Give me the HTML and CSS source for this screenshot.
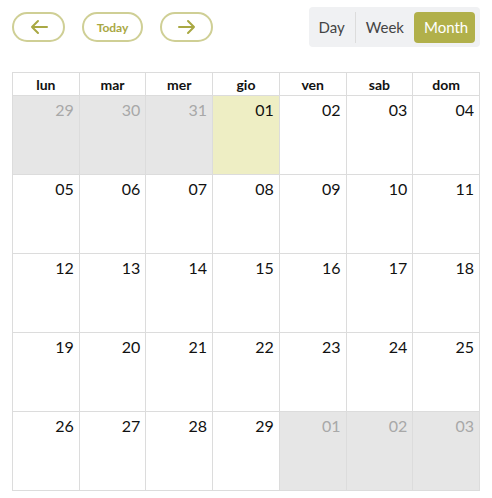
FILE: index.html
```html
<!DOCTYPE html>
<html lang="it">
<head>
    <meta charset="UTF-8">
    <title>Calendario</title>
    <link rel="stylesheet" href="styles.css">
</head>
<body>

<div class="toolbar">
    <div class="nav">
        <button class="navbtn arrow" title="prev">
            <svg width="20" height="16" viewBox="0 0 20 16"><path d="M18 8H3M9 2L3 8l6 6" fill="none" stroke="#a9a843" stroke-width="2" stroke-linecap="round" stroke-linejoin="round"/></svg>
        </button>
        <button class="navbtn todaybtn">Today</button>
        <button class="navbtn arrow" title="next">
            <svg width="20" height="16" viewBox="0 0 20 16"><path d="M2 8h15M11 2l6 6-6 6" fill="none" stroke="#a9a843" stroke-width="2" stroke-linecap="round" stroke-linejoin="round"/></svg>
        </button>
    </div>
    <div class="views">
        <span class="view">Day</span>
        <span class="sep"></span>
        <span class="view">Week</span>
        <span class="view active">Month</span>
    </div>
</div>

<table class="month">
    <thead>
        <tr>
            <th>lun</th><th>mar</th><th>mer</th><th>gio</th><th>ven</th><th>sab</th><th>dom</th>
        </tr>
    </thead>
    <tbody>
        <tr>
            <td class="other">29</td><td class="other">30</td><td class="other">31</td><td class="current">01</td><td>02</td><td>03</td><td>04</td>
        </tr>
        <tr>
            <td>05</td><td>06</td><td>07</td><td>08</td><td>09</td><td>10</td><td>11</td>
        </tr>
        <tr>
            <td>12</td><td>13</td><td>14</td><td>15</td><td>16</td><td>17</td><td>18</td>
        </tr>
        <tr>
            <td>19</td><td>20</td><td>21</td><td>22</td><td>23</td><td>24</td><td>25</td>
        </tr>
        <tr>
            <td>26</td><td>27</td><td>28</td><td>29</td><td class="other">01</td><td class="other">02</td><td class="other">03</td>
        </tr>
    </tbody>
</table>

</body>
</html>
```

FILE: styles.css
```css
* {
    margin: 0;
    padding: 0;
    box-sizing: border-box;
}

body {
    padding: 7px 12px 0 12px;
    font-family: Lato, "Liberation Sans", sans-serif;
    background: #fff;
    color: #111;
}

.toolbar {
    display: flex;
    justify-content: space-between;
    align-items: center;
    height: 40px;
}

.nav {
    display: flex;
    gap: 17px;
    align-items: center;
}

.navbtn {
    height: 30px;
    border: 2px solid #cfcf95;
    border-radius: 15px;
    background: #fff;
    color: #a9a843;
    font-family: Lato, "Liberation Sans", sans-serif;
    display: flex;
    align-items: center;
    justify-content: center;
}

.arrow {
    width: 53px;
}

.todaybtn {
    width: 61px;
    font-size: 12px;
    font-weight: bold;
}

.views {
    display: flex;
    align-items: center;
    height: 40px;
    padding: 0 5px 0 0;
    background: #f0f1f3;
    border-radius: 4px;
}

.view {
    height: 31px;
    line-height: 31px;
    font-size: 15px;
    color: #444;
    padding: 0 10px;
    border-radius: 4px;
}

.sep {
    width: 1px;
    height: 31px;
    background: #dcdcdc;
}

.view.active {
    background: #b1b04a;
    color: #fff;
    width: 61px;
    text-align: center;
}

.month {
    margin-top: 25px;
    width: 468px;
    table-layout: fixed;
    border-collapse: collapse;
}

.month th,
.month td {
    border: 1px solid #dcdcdc;
}

.month th {
    height: 23px;
    font-size: 14px;
    font-weight: bold;
    text-align: center;
    color: #111;
}

.month td {
    height: 79px;
    vertical-align: top;
    text-align: right;
    padding: 4px 5px 0 0;
    font-size: 16px;
    line-height: 20px;
}

.month td.other {
    background: #e6e6e6;
    color: #a8a8a8;
}

.month td.current {
    background: #eeeec4;
}
```
